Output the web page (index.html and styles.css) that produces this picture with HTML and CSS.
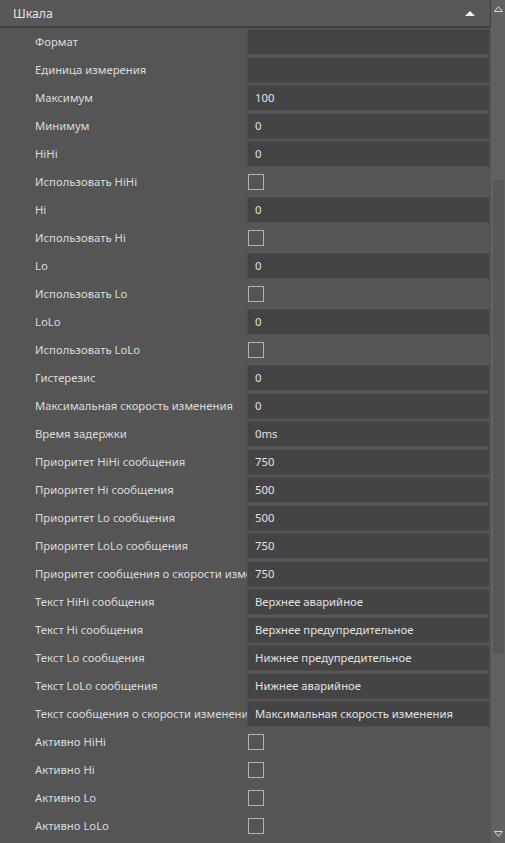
FILE: index.html
```html
<!DOCTYPE html>
<html lang="ru">
<head>
  <meta charset="UTF-8">
  <title>Шкала</title>
  <link rel="stylesheet" href="styles.css">
</head>
<body>
  <div class="panel">
    <div class="content">
      <div class="group-header">
        <span>Шкала</span>
        <svg class="collapse" width="12" height="8" viewBox="0 0 12 8"><path d="M1 7 L6 2 L11 7 Z" fill="#f0f0f0"/></svg>
      </div>

      <div class="prop"><div class="name">Формат</div><div class="val"><div class="input"></div></div></div>
      <div class="prop"><div class="name">Единица измерения</div><div class="val"><div class="input"></div></div></div>
      <div class="prop"><div class="name">Максимум</div><div class="val"><div class="input">100</div></div></div>
      <div class="prop"><div class="name">Минимум</div><div class="val"><div class="input">0</div></div></div>
      <div class="prop"><div class="name">HiHi</div><div class="val"><div class="input">0</div></div></div>
      <div class="prop"><div class="name">Использовать HiHi</div><div class="val"><span class="check"></span></div></div>
      <div class="prop"><div class="name">Hi</div><div class="val"><div class="input">0</div></div></div>
      <div class="prop"><div class="name">Использовать Hi</div><div class="val"><span class="check"></span></div></div>
      <div class="prop"><div class="name">Lo</div><div class="val"><div class="input">0</div></div></div>
      <div class="prop"><div class="name">Использовать Lo</div><div class="val"><span class="check"></span></div></div>
      <div class="prop"><div class="name">LoLo</div><div class="val"><div class="input">0</div></div></div>
      <div class="prop"><div class="name">Использовать LoLo</div><div class="val"><span class="check"></span></div></div>
      <div class="prop"><div class="name">Гистерезис</div><div class="val"><div class="input">0</div></div></div>
      <div class="prop"><div class="name">Максимальная скорость изменения</div><div class="val"><div class="input">0</div></div></div>
      <div class="prop"><div class="name">Время задержки</div><div class="val"><div class="input">0ms</div></div></div>
      <div class="prop"><div class="name">Приоритет HiHi сообщения</div><div class="val"><div class="input">750</div></div></div>
      <div class="prop"><div class="name">Приоритет Hi сообщения</div><div class="val"><div class="input">500</div></div></div>
      <div class="prop"><div class="name">Приоритет Lo сообщения</div><div class="val"><div class="input">500</div></div></div>
      <div class="prop"><div class="name">Приоритет LoLo сообщения</div><div class="val"><div class="input">750</div></div></div>
      <div class="prop"><div class="name">Приоритет сообщения о скорости изменения</div><div class="val"><div class="input">750</div></div></div>
      <div class="prop"><div class="name">Текст HiHi сообщения</div><div class="val"><div class="input">Верхнее аварийное</div></div></div>
      <div class="prop"><div class="name">Текст Hi сообщения</div><div class="val"><div class="input">Верхнее предупредительное</div></div></div>
      <div class="prop"><div class="name">Текст Lo сообщения</div><div class="val"><div class="input">Нижнее предупредительное</div></div></div>
      <div class="prop"><div class="name">Текст LoLo сообщения</div><div class="val"><div class="input">Нижнее аварийное</div></div></div>
      <div class="prop"><div class="name">Текст сообщения о скорости изменения</div><div class="val"><div class="input">Максимальная скорость изменения</div></div></div>
      <div class="prop"><div class="name">Активно HiHi</div><div class="val"><span class="check"></span></div></div>
      <div class="prop"><div class="name">Активно Hi</div><div class="val"><span class="check"></span></div></div>
      <div class="prop"><div class="name">Активно Lo</div><div class="val"><span class="check"></span></div></div>
      <div class="prop"><div class="name">Активно LoLo</div><div class="val"><span class="check"></span></div></div>
    </div>

    <div class="scrollbar">
      <svg class="arrow" width="9" height="6" viewBox="0 0 9 6"><path d="M0.5 5.5 L4.5 0.8 L8.5 5.5 Z" fill="none" stroke="#d8d8d8" stroke-width="1"/></svg>
      <div class="track"><div class="thumb"></div></div>
      <svg class="arrow" width="9" height="6" viewBox="0 0 9 6"><path d="M0.5 0.5 L4.5 5.2 L8.5 0.5 Z" fill="none" stroke="#d8d8d8" stroke-width="1"/></svg>
    </div>
  </div>
</body>
</html>
```

FILE: styles.css
```css
body {
  margin: 0;
  background-color: #555555;
  font-family: "Noto Sans", "Open Sans", sans-serif;
  font-size: 11.3px;
  color: #dcdcdc;
}

.panel {
  display: flex;
  height: 843px;
  overflow: hidden;
}

.content {
  flex: 1;
  min-width: 0;
}

.group-header {
  display: flex;
  align-items: center;
  justify-content: space-between;
  height: 26px;
  padding: 0 14px 0 13px;
  background-color: #585858;
  border-bottom: 2px solid #3e3e3e;
  border-right: 1px solid #3e3e3e;
  font-size: 12.3px;
  color: #e4e4e4;
}

.prop {
  display: flex;
  height: 28px;
}

.name {
  width: 212px;
  padding-left: 35px;
  line-height: 28px;
  white-space: nowrap;
  overflow: hidden;
  text-overflow: clip;
}

.val {
  flex: 1;
  display: flex;
  align-items: center;
  padding-right: 1px;
}

.input {
  flex: 1;
  height: 24px;
  line-height: 24px;
  padding-left: 7px;
  background-color: #444444;
  border: 1px solid #4c4c4c;
  color: #e2e2e2;
  white-space: nowrap;
  overflow: hidden;
}

.check {
  width: 14px;
  height: 14px;
  margin-left: 1px;
  border: 1px solid #b4b4b4;
}

.scrollbar {
  width: 14px;
  display: flex;
  flex-direction: column;
  align-items: center;
  background-color: #616161;
}

.arrow {
  margin: 6px 0;
}

.track {
  flex: 1;
  width: 100%;
  padding-top: 162px;
}

.thumb {
  width: 11px;
  height: 474px;
  margin-left: 2px;
  background-color: #575757;
}
```
